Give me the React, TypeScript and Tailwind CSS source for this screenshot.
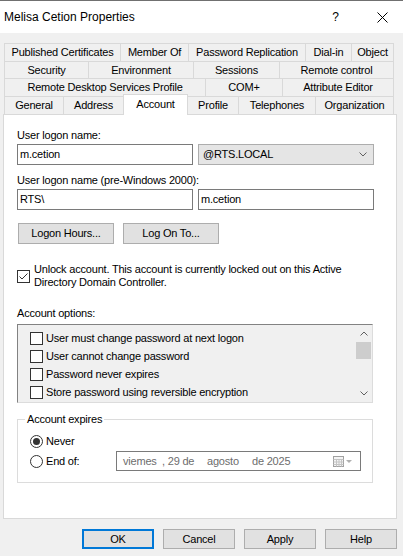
import clsx from "clsx";

type TabDef = { label: string; w: string; selected?: boolean; noLeft?: boolean };

const tabRows: { h: string; tabs: TabDef[] }[] = [
  {
    h: "h-[18px]",
    tabs: [
      { label: "Published Certificates", w: "w-[116px]" },
      { label: "Member Of", w: "w-[68px]" },
      { label: "Password Replication", w: "w-[117px]" },
      { label: "Dial-in", w: "w-[46px]" },
      { label: "Object", w: "w-[43px]" },
    ],
  },
  {
    h: "h-[17px]",
    tabs: [
      { label: "Security", w: "w-[84px]" },
      { label: "Environment", w: "w-[105px]" },
      { label: "Sessions", w: "w-[86px]" },
      { label: "Remote control", w: "w-[115px]" },
    ],
  },
  {
    h: "h-[18px]",
    tabs: [
      { label: "Remote Desktop Services Profile", w: "w-[201px]" },
      { label: "COM+", w: "w-[77px]" },
      { label: "Attribute Editor", w: "w-[112px]" },
    ],
  },
  {
    h: "h-[18px]",
    tabs: [
      { label: "General", w: "w-[59px]" },
      { label: "Address", w: "w-[60px]" },
      { label: "Account", w: "w-[65px]", selected: true },
      { label: "Profile", w: "w-[50px]", noLeft: true },
      { label: "Telephones", w: "w-[77px]" },
      { label: "Organization", w: "w-[79px]" },
    ],
  },
];

const accountOptions = [
  "User must change password at next logon",
  "User cannot change password",
  "Password never expires",
  "Store password using reversible encryption",
];

function Tab({ tab, last }: { tab: TabDef; last: boolean }) {
  return (
    <div
      className={clsx(
        "flex items-center justify-center whitespace-nowrap border-t border-[#d9d9d9]",
        tab.w,
        !tab.noLeft && "border-l",
        last && "border-r",
        tab.selected
          ? "relative z-10 -mt-[2px] h-[21px] border-r bg-white pb-[2px]"
          : "h-full bg-[#f0f0f0]"
      )}
    >
      {tab.label}
    </div>
  );
}

function CheckBox({ checked }: { checked?: boolean }) {
  return (
    <div className="flex h-[13px] w-[13px] shrink-0 items-center justify-center border border-[#333] bg-white">
      {checked && (
        <svg width="11" height="11" viewBox="0 0 11 11">
          <path d="M1.5 5.5 L4 8 L9.5 2.5" fill="none" stroke="#333" strokeWidth="1" />
        </svg>
      )}
    </div>
  );
}

function Radio({ checked }: { checked?: boolean }) {
  return (
    <div className="flex h-[13px] w-[13px] shrink-0 items-center justify-center rounded-full border border-[#333] bg-white">
      {checked && <div className="h-[7px] w-[7px] rounded-full bg-[#333]" />}
    </div>
  );
}

function Chevron({ up }: { up?: boolean }) {
  return (
    <svg width="8" height="5" viewBox="0 0 8 5">
      <path
        d={up ? "M0.5 4.5 L4 1 L7.5 4.5" : "M0.5 0.5 L4 4 L7.5 0.5"}
        fill="none"
        stroke="#606060"
        strokeWidth="1"
      />
    </svg>
  );
}

function WinButton({ label, wide, focused }: { label: string; wide?: boolean; focused?: boolean }) {
  return (
    <div
      className={clsx(
        "flex items-center justify-center bg-[#e1e1e1]",
        wide ? "h-[21px] w-[96px]" : "h-[20px] w-[72px]",
        focused ? "border-2 border-[#0078d7]" : "border border-[#adadad]"
      )}
    >
      {label}
    </div>
  );
}

export default function App() {
  return (
    <div className="flex h-[556px] w-[403px] flex-col overflow-hidden bg-[#f0f0f0] font-['Liberation_Sans',Arial,sans-serif] text-[11px] leading-[13px] tracking-[-0.2px] text-black">
      {/* Title bar */}
      <div className="flex h-[33px] items-center border-t border-[#707070] bg-white pl-[4px] text-[12px] tracking-normal">
        <span>Melisa Cetion Properties</span>
        <span className="ml-auto mr-[38px]">?</span>
        <svg width="11" height="11" viewBox="0 0 11 11" className="mr-[15px]">
          <path d="M0.5 0.5 L10.5 10.5 M10.5 0.5 L0.5 10.5" stroke="#000" strokeWidth="1" />
        </svg>
      </div>

      {/* Tabs */}
      <div className="ml-[4px] mt-[10px] flex w-[390px] flex-col">
        {tabRows.map((row, i) => (
          <div key={i} className={clsx("flex items-start", row.h)}>
            {row.tabs.map((t, j) => (
              <Tab key={t.label} tab={t} last={j === row.tabs.length - 1} />
            ))}
          </div>
        ))}
      </div>

      {/* Panel */}
      <div className="ml-[3px] flex h-[405px] w-[394px] flex-col border border-[#d9d9d9] bg-white pl-[13px]">
        <div className="mt-[13px] leading-[15px]">User logon name:</div>
        <div className="mt-[1px] flex h-[21px] gap-[5px]">
          <div className="flex w-[176px] items-center border border-[#7a7a7a] px-[2px]">m.cetion</div>
          <div className="flex w-[176px] items-center border border-[#adadad] bg-[#e5e5e5] pl-[4px] pr-[6px]">
            <span>@RTS.LOCAL</span>
            <span className="ml-auto">
              <Chevron />
            </span>
          </div>
        </div>

        <div className="mt-[8px] leading-[15px]">User logon name (pre-Windows 2000):</div>
        <div className="mt-[1px] flex h-[21px] gap-[5px]">
          <div className="flex w-[176px] items-center border border-[#7a7a7a] px-[2px]">RTS\</div>
          <div className="flex w-[176px] items-center border border-[#7a7a7a] px-[2px]">m.cetion</div>
        </div>

        <div className="ml-[1px] mt-[13px] flex gap-[9px]">
          <WinButton label="Logon Hours..." wide />
          <WinButton label="Log On To..." wide />
        </div>

        <div className="mt-[19px] flex items-center gap-[4px]">
          <CheckBox checked />
          <div className="whitespace-nowrap">
            Unlock account. This account is currently locked out on this Active
            <br />
            Directory Domain Controller.
          </div>
        </div>

        <div className="mt-[17px] leading-[15px]">Account options:</div>
        <div className="mt-[3px] flex h-[79px] w-[356px] border-b border-l border-r border-t border-b-[#dcdcdc] border-l-[#828282] border-r-[#dcdcdc] border-t-[#828282] bg-[#f0f0f0]">
          <div className="flex flex-1 flex-col pl-[12px] pt-[4px]">
            {accountOptions.map((o) => (
              <div key={o} className="flex h-[18px] items-center gap-[3px] whitespace-nowrap">
                <CheckBox />
                <span>{o}</span>
              </div>
            ))}
          </div>
          <div className="flex w-[17px] flex-col">
            <div className="flex h-[17px] items-center justify-center">
              <Chevron up />
            </div>
            <div className="mx-[1px] h-[17px] bg-[#cdcdcd]" />
            <div className="flex-1" />
            <div className="flex h-[17px] items-center justify-center">
              <Chevron />
            </div>
          </div>
        </div>

        {/* Account expires group */}
        <div className="relative mt-[16px] flex h-[64px] w-[356px] flex-col border border-[#dcdcdc] pl-[12px] pt-[12px]">
          <span className="absolute -top-[8px] left-[7px] bg-white px-[2px] leading-[15px]">Account expires</span>
          <div className="flex h-[18px] items-center gap-[3px]">
            <Radio checked />
            <span>Never</span>
          </div>
          <div className="mt-[1px] flex h-[20px] items-center">
            <Radio />
            <span className="ml-[3px] w-[70px]">End of:</span>
            <div className="flex h-[20px] w-[245px] items-center border border-[#7a7a7a] pl-[6px] pr-[7px] text-[#6d6d6d]">
              <span className="w-[39px]">viemes</span>
              <span className="w-[45px]">, 29 de</span>
              <span className="w-[45px]">agosto</span>
              <span>de 2025</span>
              <svg width="20" height="11" viewBox="0 0 20 11" className="ml-auto">
                <rect x="0.5" y="0.5" width="10" height="10" fill="#f4f4f4" stroke="#a0a0a0" />
                <path d="M0.5 3.5 H10.5 M0.5 6 H10.5 M0.5 8.5 H10.5 M3.5 3.5 V10.5 M6 3.5 V10.5 M8.5 3.5 V10.5" stroke="#c4c4c4" />
                <path d="M13 4 L19 4 L16 7 Z" fill="#b0b0b0" />
              </svg>
            </div>
          </div>
        </div>
      </div>

      {/* Dialog buttons */}
      <div className="mt-[10px] flex justify-end gap-[9px] pr-[6px]">
        <WinButton label="OK" focused />
        <WinButton label="Cancel" />
        <WinButton label="Apply" />
        <WinButton label="Help" />
      </div>
    </div>
  );
}
